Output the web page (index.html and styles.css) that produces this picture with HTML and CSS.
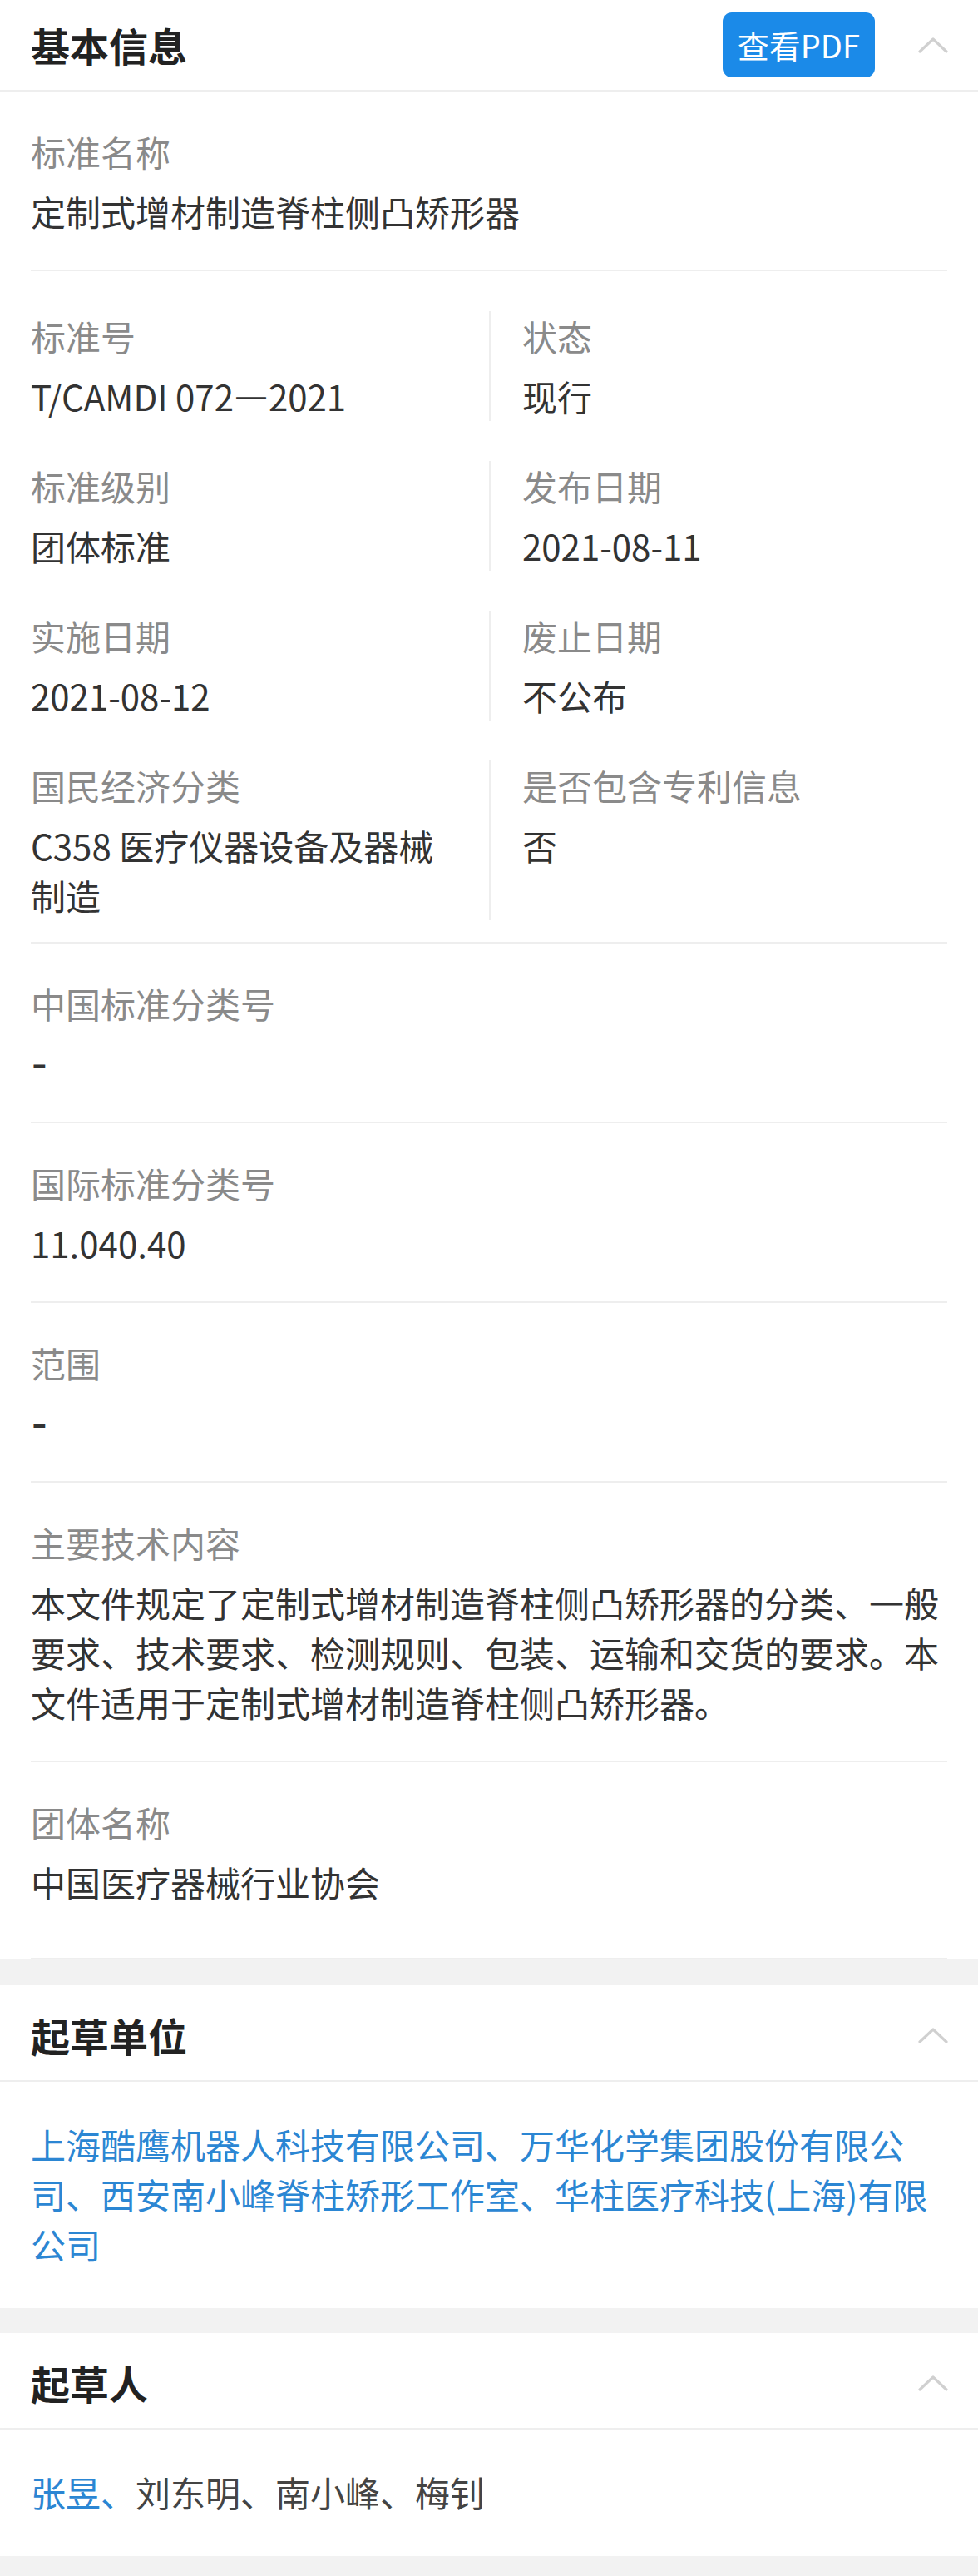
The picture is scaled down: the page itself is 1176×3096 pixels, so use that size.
FILE: index.html
```html
<!DOCTYPE html>
<html lang="zh-CN">
<head>
<meta charset="utf-8">
<title>基本信息</title>
<link rel="stylesheet" href="styles.css">
</head>
<body>
<div class="page">
  <section class="card card--info">
    <header class="card-head">
      <h2 class="card-title">基本信息</h2>
      <div class="head-actions">
        <button class="pdf-btn" type="button">查看PDF</button>
        <svg class="chevron" viewBox="0 0 36 20" width="36" height="20"><polyline points="2,18 18,3 34,18" fill="none" stroke="#d0d0d0" stroke-width="3.2" stroke-linecap="round" stroke-linejoin="round"/></svg>
      </div>
    </header>
    <div class="card-body">
      <div class="item">
        <div class="label">标准名称</div>
        <div class="value">定制式增材制造脊柱侧凸矫形器</div>
      </div>
      <div class="item item--grid">
        <div class="cell">
          <div class="label">标准号</div>
          <div class="value">T/CAMDI 072—2021</div>
        </div>
        <div class="cell cell--right">
          <div class="label">状态</div>
          <div class="value">现行</div>
        </div>
        <div class="cell">
          <div class="label">标准级别</div>
          <div class="value">团体标准</div>
        </div>
        <div class="cell cell--right">
          <div class="label">发布日期</div>
          <div class="value">2021-08-11</div>
        </div>
        <div class="cell">
          <div class="label">实施日期</div>
          <div class="value">2021-08-12</div>
        </div>
        <div class="cell cell--right">
          <div class="label">废止日期</div>
          <div class="value">不公布</div>
        </div>
        <div class="cell">
          <div class="label">国民经济分类</div>
          <div class="value">C358 医疗仪器设备及器械制造</div>
        </div>
        <div class="cell cell--right">
          <div class="label">是否包含专利信息</div>
          <div class="value">否</div>
        </div>
      </div>
      <div class="item">
        <div class="label">中国标准分类号</div>
        <div class="value"><span class="dash">-</span></div>
      </div>
      <div class="item">
        <div class="label">国际标准分类号</div>
        <div class="value">11.040.40</div>
      </div>
      <div class="item">
        <div class="label">范围</div>
        <div class="value"><span class="dash">-</span></div>
      </div>
      <div class="item">
        <div class="label">主要技术内容</div>
        <div class="value">本文件规定了定制式增材制造脊柱侧凸矫形器的分类、一般要求、技术要求、检测规则、包装、运输和交货的要求。本文件适用于定制式增材制造脊柱侧凸矫形器。</div>
      </div>
      <div class="item item--last">
        <div class="label">团体名称</div>
        <div class="value">中国医疗器械行业协会</div>
      </div>
    </div>
  </section>

  <section class="card">
    <header class="card-head">
      <h2 class="card-title">起草单位</h2>
      <div class="head-actions">
        <svg class="chevron" viewBox="0 0 36 20" width="36" height="20"><polyline points="2,18 18,3 34,18" fill="none" stroke="#d0d0d0" stroke-width="3.2" stroke-linecap="round" stroke-linejoin="round"/></svg>
      </div>
    </header>
    <div class="card-text">
      <span class="link">上海酷鹰机器人科技有限公司、万华化学集团股份有限公司、西安南小峰脊柱矫形工作室、华柱医疗科技(上海)有限公司</span>
    </div>
  </section>

  <section class="card">
    <header class="card-head">
      <h2 class="card-title">起草人</h2>
      <div class="head-actions">
        <svg class="chevron" viewBox="0 0 36 20" width="36" height="20"><polyline points="2,18 18,3 34,18" fill="none" stroke="#d0d0d0" stroke-width="3.2" stroke-linecap="round" stroke-linejoin="round"/></svg>
      </div>
    </header>
    <div class="card-text">
      <span class="link">张昱、</span><span class="plain">刘东明、南小峰、梅钊</span>
    </div>
  </section>
</div>
</body>
</html>
```

FILE: styles.css
```css
* { box-sizing: border-box; }

html, body {
  margin: 0;
  padding: 0;
  background: #f2f2f2;
}

body {
  font-family: "Noto Sans CJK SC", "Noto Sans", sans-serif;
  color: #333333;
  font-size: 42px;
  line-height: 60px;
}

.page {
  margin-top: -6px;
}

.card {
  background: #ffffff;
  margin-bottom: 30px;
}

.card--info {
  margin-bottom: 31px;
}

.card-head {
  height: 116px;
  padding: 6px 37px 0 37px;
  border-bottom: 2px solid #eeeeee;
  display: flex;
  align-items: center;
  justify-content: space-between;
}

.card-title {
  margin: 0;
  font-size: 47px;
  font-weight: 700;
  color: #222222;
  line-height: 60px;
}

.head-actions {
  display: flex;
  align-items: center;
  gap: 52px;
}

.pdf-btn {
  height: 78px;
  padding: 0 18px;
  border: none;
  border-radius: 11px;
  background: #1b8ae8;
  color: #ffffff;
  font-family: "Noto Sans CJK SC", "Noto Sans", sans-serif;
  font-size: 38px;
  line-height: 78px;
}

.chevron {
  display: block;
  width: 36px;
  height: 20px;
  margin-right: -1px;
}

.card-body {
  padding: 0 37px;
}

.item {
  padding: 42px 0 40px;
  border-bottom: 2px solid #eeeeee;
}

.item--last {
  padding-bottom: 61px;
}

.label {
  color: #8a8a8a;
  margin-bottom: 12px;
}

.value {
  color: #333333;
}

.dash {
  display: inline-block;
  font-weight: 700;
  transform: scaleX(1.2);
  transform-origin: left center;
  position: relative;
  top: -2px;
  margin-left: 1px;
}

.item--grid {
  display: grid;
  grid-template-columns: 1fr 1fr;
  row-gap: 48px;
  padding: 48px 0 26px;
}

.cell {
  padding-right: 30px;
}

.cell--right {
  border-left: 2px solid #eeeeee;
  padding-left: 38px;
  padding-right: 0;
}

.card-text {
  padding: 45px 37px 47px;
}

.link {
  color: #2b86d3;
}

.plain {
  color: #444444;
}
```
